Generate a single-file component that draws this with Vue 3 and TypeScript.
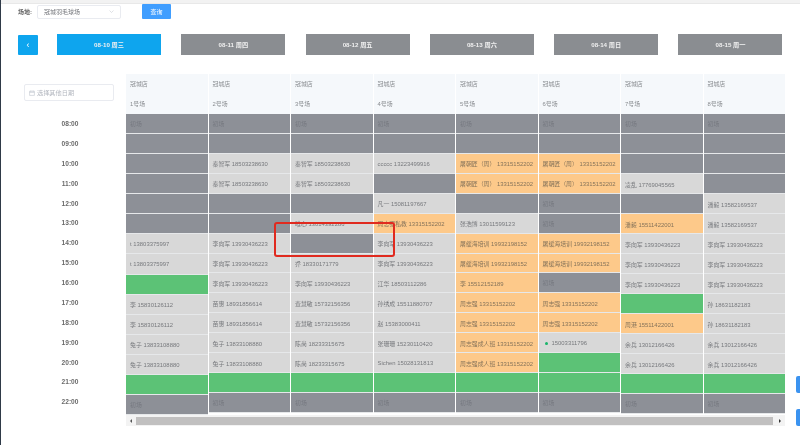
<script setup lang="ts">
type Cell = { t?: string; k: 'g' | 'l' | 'o' | 'n'; dot?: boolean }
const g = (t?: string): Cell => ({ t, k: 'g' })
const l = (t: string): Cell => ({ t, k: 'l' })
const o = (t: string): Cell => ({ t, k: 'o' })
const n = (): Cell => ({ k: 'n' })

const days = ['08-11 周四', '08-12 周五', '08-13 周六', '08-14 周日', '08-15 周一']
const times = ['08:00','09:00','10:00','11:00','12:00','13:00','14:00','15:00','16:00','17:00','18:00','19:00','20:00','21:00','22:00']

const lxj = '李向军 13930436223'
const qzj = '秦智军 18503238630'
const tz = '兔子 13833108880'
const zm = '屠朝匠（周） 13315152202'
const hp = '屠缓海培训 19932198152'
const zq = '周志强 13315152202'
const zc = '周志强成人班 13315152202'
const yb = '余兵 13012166426'
const py = '潘毅 13582169537'

const columns: { name: string; cls: string; cells: Cell[] }[] = [
  { name: '1号场', cls: 'c-a', cells: [g('初场'), g(), g(), g(), g(), g(), l('t 13803375997'), l('t 13803375997'), n(), l('李 15830126112'), l('李 15830126112'), l(tz), l(tz), n(), g('初场')] },
  { name: '2号场', cls: 'c-b', cells: [g('初场'), g(), l(qzj), l(qzj), g(), g(), l(lxj), l(lxj), l(lxj), l('苗惠 18931856614'), l('苗惠 18931856614'), l(tz), l(tz), n(), g('初场')] },
  { name: '3号场', cls: 'c-b', cells: [g('初场'), g(), l(qzj), l(qzj), g(), l('唯心 13014392286'), g(), l('乔 18330171779'), l(lxj), l('查慧敏 15732156356'), l('查慧敏 15732156356'), l('陈尚 18233315675'), l('陈尚 18233315675'), n(), g('初场')] },
  { name: '4号场', cls: 'c-b', cells: [g('初场'), g(), l('ccccc 13223499916'), g(), l('凡一 15081197667'), o('周志强私教 13315152202'), l(lxj), l(lxj), l('江华 18503112286'), l('孙绣成 15511880707'), l('赵 15383000411'), l('张珊珊 15230110420'), l('Sichen 15028131813'), n(), g('初场')] },
  { name: '5号场', cls: 'c-b', cells: [g('初场'), g(), o(zm), o(zm), g(), l('张浩博 13011599123'), o(hp), o(hp), o('李 15512152189'), o(zq), o(zq), o(zc), o(zc), n(), g('初场')] },
  { name: '6号场', cls: 'c-b', cells: [g('初场'), g(), o(zm), o(zm), g('初场'), g('初场'), o(hp), o(hp), g('初场'), o(zq), o(zq), { t: '15003311796', k: 'l', dot: true }, n(), n(), g('初场')] },
  { name: '7号场', cls: 'c-c', cells: [g('初场'), g(), g(), l('凌乱 17769045565'), g(), o('潘毅 15511422001'), l(lxj), l(lxj), l(lxj), n(), o('周港 15511422001'), l(yb), l(yb), n(), g('初场')] },
  { name: '8号场', cls: 'c-c', cells: [g('初场'), g(), g(), g(), l(py), l(py), l(lxj), l(lxj), l(lxj), l('孙 18631182183'), l('孙 18631182183'), l(yb), l(yb), n(), g('初场')] },
]
</script>

<template>
  <div class="page">
    <div class="topline"></div>
    <div class="filter">
      <span class="filter-label">场地:</span>
      <div class="select">
        <span>冠城羽毛球场</span>
        <svg class="chev" viewBox="0 0 10 6" width="5" height="3"><path d="M1 1l4 4 4-4" fill="none" stroke="#c0c4cc" stroke-width="1"/></svg>
      </div>
      <button class="query">查询</button>
    </div>

    <div class="tabs">
      <button class="back">‹</button>
      <div class="tab active">08-10 周三</div>
      <div v-for="d in days" :key="d" class="tab">{{ d }}</div>
    </div>

    <div class="board">
      <div class="side">
        <div class="picker">
          <svg viewBox="0 0 10 10" width="6" height="6"><path d="M1 2h8v7H1zM1 4h8M3 1v2M7 1v2" fill="none" stroke="#c0c4cc" stroke-width="1"/></svg>
          <span>选择其他日期</span>
        </div>
        <div class="times">
          <div v-for="t in times" :key="t" class="time">{{ t }}</div>
        </div>
      </div>
      <div class="table">
        <div class="cols">
          <div v-for="c in columns" :key="c.name" class="col" :class="c.cls">
            <div class="head">冠城店</div>
            <div class="head">{{ c.name }}</div>
            <div class="cells">
              <div v-for="(cell, i) in c.cells" :key="i" class="cell" :class="cell.k">
                <i v-if="cell.dot" class="dot"></i>{{ cell.t }}
              </div>
            </div>
          </div>
        </div>
        <div class="scroll">
          <span class="arrow left"></span>
          <div class="thumb"></div>
          <span class="arrow right"></span>
        </div>
      </div>
      <div class="mark"></div>
    </div>

    <div class="float f1"></div>
    <div class="float f2"></div>
  </div>
</template>

<style>
html, body { margin: 0; background: #fff; overflow: hidden; }
</style>

<style scoped>
.page {
  position: relative;
  width: 800px;
  height: 445px;
  overflow: hidden;
  background: #fff;
  box-sizing: border-box;
  border-left: 1px solid #2f3a48;
  font-family: "Liberation Sans", "Noto Sans CJK SC", sans-serif;
  color: #606266;
  filter: blur(0.45px);
}
.topline { height: 3px; background: #f2f2f2; border-bottom: 1px solid #e8e8e8; }
.filter { display: flex; align-items: center; height: 15px; padding-left: 17px; }
.filter-label { font-size: 6px; font-weight: 700; width: 19px; flex: none; color: #666; }
.select {
  width: 84px; height: 14px; flex: none; box-sizing: border-box; border: 1px solid #e9ebf0; border-radius: 2px;
  display: flex; align-items: center; justify-content: space-between; padding: 0 6px;
  font-size: 6px; color: #74767b;
}
.query {
  margin-left: 21px; width: 29px; height: 15px; flex: none; border: 0; border-radius: 1px; background: #409eff;
  color: #fff; font: 6px "Liberation Sans", "Noto Sans CJK SC", sans-serif; padding: 0;
}
.tabs { display: flex; align-items: center; margin-top: 15px; padding-left: 17px; height: 21px; }
.back {
  width: 20px; height: 20px; flex: none; border: 0; padding: 0; margin-right: 19px; background: #0ea5ee; color: #fff;
  border-radius: 1px; font: 9px "Liberation Sans", sans-serif;
}
.tab {
  width: 104px; height: 21px; flex: none; margin-right: 20.3px; background: #8a8d91; color: #f0f0f0;
  font-size: 6.2px; font-weight: 700; display: flex; align-items: center; justify-content: center;
}
.tab.active { background: #0ea5ee; }
.board { display: flex; position: relative; margin-top: 19px; }
.side { width: 125px; flex: none; }
.picker {
  width: 90px; height: 17px; margin: 10px 0 0 23px; box-sizing: border-box; border: 1px solid #e9ebf0; border-radius: 2px;
  display: flex; align-items: center; gap: 2px; padding-left: 4px; font-size: 6.2px; color: #b4b8c0;
}
.times { margin-top: 13px; }
.time { height: 19.88px; line-height: 19.88px; text-align: center; width: 138px; font-size: 6.6px; font-weight: 700; color: #6a6a6a; }
.table { width: 659px; flex: none; position: relative; }
.cols { display: flex; align-items: flex-start; gap: 1px; height: 341px; }
.col { flex: 1; min-width: 0; }
.head {
  height: 20px; background: #f5f8fb; box-sizing: border-box; padding-left: 4px;
  font-size: 5.9px; line-height: 20px; color: #8a8d91;
}
.cells { display: grid; grid-template-rows: repeat(15, minmax(0, 1fr)); }
.c-a .cells { height: 301px; }
.c-b .cells { height: 299px; }
.c-c .cells { height: 300px; }
.cell {
  min-height: 0; box-sizing: border-box; border-bottom: 1px solid #e6e8ea; padding-left: 4px;
  display: flex; align-items: center; font-size: 5.9px; white-space: nowrap; overflow: hidden;
}
.cell.g { background: #8d9097; color: #767980; }
.cell.l { background: #d8d8d8; color: #77797d; padding-top: 1px; }
.cell.o { background: #fdc98a; color: #85735a; padding-top: 1px; }
.cell.n { background: #5cc276; }
.dot { width: 3px; height: 3px; border-radius: 50%; background: #18b56a; margin: 0 4px 0 2px; }
.scroll {
  position: absolute; left: 0; top: 341px; width: 100%; height: 11px; background: #f3f3f3;
  display: flex; align-items: center;
}
.thumb { flex: 1; height: 8px; margin: 1px 6px 0 4px; background: #c1c0c0; }
.arrow { width: 0; height: 0; border-top: 2px solid transparent; border-bottom: 2px solid transparent; flex: none; }
.arrow.left { border-right: 2px solid #555; margin-left: 4px; }
.arrow.right { border-left: 2px solid #333; margin-right: 4px; }
.mark {
  position: absolute; left: 273px; top: 148px; width: 121px; height: 35px; box-sizing: border-box;
  border: 2px solid #e02a1f; border-radius: 3px;
}
.float { position: absolute; right: -5px; width: 9px; height: 17px; background: #3b93f0; border-radius: 2px; }
.f1 { top: 376px; }
.f2 { top: 409px; }
</style>
